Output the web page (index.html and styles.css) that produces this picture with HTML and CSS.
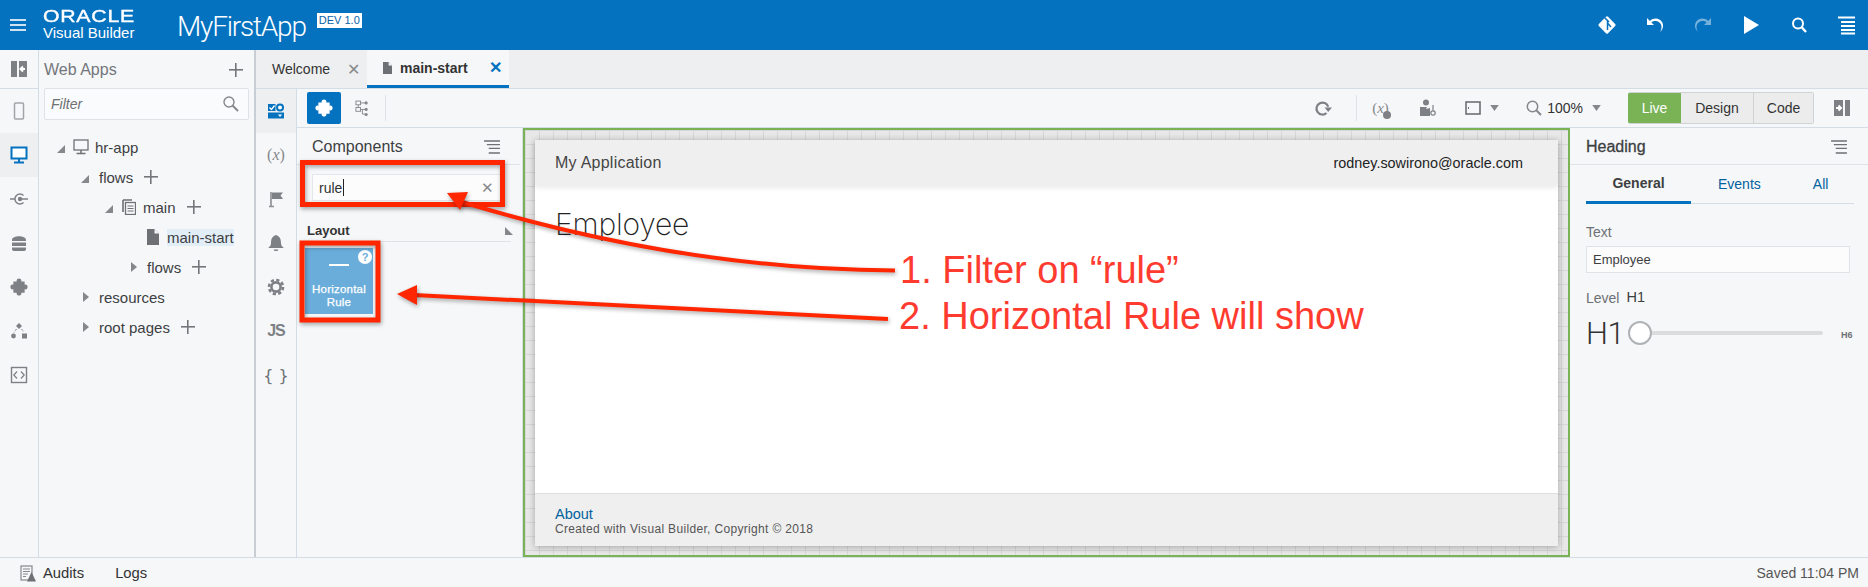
FILE: index.html
```html
<!DOCTYPE html>
<html lang="en">
<head>
    <meta charset="UTF-8">
    <title>Visual Builder - MyFirstApp</title>
    <link rel="stylesheet" href="styles.css">
</head>
<body>
<div class="app">

    <header class="topbar">
        <button class="burger"><span></span><span></span><span></span></button>
        <div class="brand">
            <div class="brand-oracle">ORACLE</div>
            <div class="brand-product">Visual Builder</div>
        </div>
        <div class="app-name">MyFirstApp</div>
        <div class="app-badge">DEV 1.0</div>
        <div class="top-actions">
            <svg class="top-ico" viewBox="0 0 20 20"><rect x="3.5" y="3.5" width="13" height="13" rx="1.5" transform="rotate(45 10 10)" fill="#fff"/><path d="M7.5 2.5 L12 7 M10.5 6 V15 M10.5 8 L14 12" stroke="#0572c0" stroke-width="1.5" fill="none"/></svg>
            <svg class="top-ico" viewBox="0 0 20 20"><path d="M2 3 V10 H9 L6.4 7.4 C9.5 4.6 15.5 6 16.4 11 C16.8 13.4 16 15.5 15 17 C18 14.5 19 10.5 17 7 C14.5 2.8 8.8 2.2 4.9 5.9 Z" fill="#fff"/></svg>
            <svg class="top-ico is-off" viewBox="0 0 20 20"><path d="M18 3 V10 H11 L13.6 7.4 C10.5 4.6 4.5 6 3.6 11 C3.2 13.4 4 15.5 5 17 C2 14.5 1 10.5 3 7 C5.5 2.8 11.2 2.2 15.1 5.9 Z" fill="#fff"/></svg>
            <svg class="top-ico" viewBox="0 0 20 20"><path d="M3 1 L18 10 L3 19 Z" fill="#fff"/></svg>
            <svg class="top-ico" viewBox="0 0 20 20"><circle cx="9" cy="8.5" r="5" fill="none" stroke="#fff" stroke-width="2"/><path d="M12.5 12 L17 17" stroke="#fff" stroke-width="2.4"/></svg>
            <svg class="top-ico" viewBox="0 0 20 20"><path d="M1 2.5 H18 M4 7 H18 M4 11 H18 M4 15 H18 M4 18.5 H18" stroke="#fff" stroke-width="2"/></svg>
        </div>
    </header>

    <div class="body">
        <nav class="rail">
            <div class="rail-item rail-head"><svg class="ico-18" viewBox="0 0 18 18"><rect x="1" y="1" width="6" height="16" fill="#7d8185"/><rect x="9" y="1" width="8" height="16" fill="#7d8185"/><path d="M15 9 H11 M13 6.5 L10.5 9 L13 11.5" stroke="#fff" stroke-width="2" fill="none"/></svg></div>
            <div class="rail-item"><svg class="ico-18" viewBox="0 0 18 18"><rect x="4.5" y="1" width="9" height="16" rx="1" fill="none" stroke="#a2a5a8" stroke-width="1.5"/></svg></div>
            <div class="rail-item is-active"><svg class="ico-18" viewBox="0 0 18 18"><rect x="1.5" y="1.5" width="15" height="11" fill="#fff" stroke="#0572c0" stroke-width="2"/><path d="M9 13 V16 M4 16.5 H14" stroke="#0572c0" stroke-width="2"/></svg></div>
            <div class="rail-item"><svg class="ico-18" viewBox="0 0 18 18"><path d="M13.5 5.5 A5 5 0 1 0 13.5 12.5" fill="none" stroke="#7d8185" stroke-width="1.5"/><circle cx="10" cy="9" r="2.2" fill="#7d8185"/><path d="M0 9 H5 M10 9 H18" stroke="#7d8185" stroke-width="1.4"/></svg></div>
            <div class="rail-item"><svg class="ico-18" viewBox="0 0 18 18"><path d="M2 6 C2 1 16 1 16 6 V7 H2 Z M2 8.5 H16 V12 H2 Z M2 13.5 H16 V15 C16 17 14 17 14 17 H4 C2 17 2 15 2 15 Z" fill="#7d8185"/></svg></div>
            <div class="rail-item"><svg class="ico-18" viewBox="2 2 16 16"><path class="grey-fill" d="M5 5 H8 C7 1.5 13 1.5 12 5 H15 V8 C18.5 7 18.5 13 15 12 V15 H12 C13 18.5 7 18.5 8 15 H5 V12 C1.5 13 1.5 7 5 8 Z"/></svg></div>
            <div class="rail-item"><svg class="ico-18" viewBox="0 0 18 18"><path d="M9 1 L12 4 L9 7 L6 4 Z" fill="#7d8185"/><circle cx="3.5" cy="14" r="2.4" fill="#7d8185"/><rect x="12" y="11.5" width="5" height="5" fill="#7d8185"/><path d="M6.5 7 L4 10.5 M11.5 7 L14 10" stroke="#7d8185" stroke-dasharray="2 1.5"/></svg></div>
            <div class="rail-item"><svg class="ico-18" viewBox="0 0 18 18"><rect x="1.5" y="1.5" width="15" height="15" fill="none" stroke="#7d8185" stroke-width="1.4"/><path d="M7 5.5 L3.8 9 L7 12.5 M11 5.5 L14.2 9 L11 12.5" fill="none" stroke="#7d8185" stroke-width="1.2"/></svg></div>
        </nav>

        <aside class="explorer">
            <div class="explorer-head">
                <span class="explorer-title">Web Apps</span>
                <span class="plus plus-big"></span>
            </div>
            <div class="filter-box">
                <span class="filter-hint">Filter</span>
                <svg class="ico-18" viewBox="0 0 18 18"><circle cx="7" cy="7" r="5" fill="none" stroke="#85888b" stroke-width="1.4"/><path d="M10.5 10.5 L16 16" stroke="#85888b" stroke-width="2"/></svg>
            </div>
            <ul class="tree">
                <li class="tree-row lv-app">
                    <svg class="twisty tw-wide" viewBox="0 0 8 8"><path d="M8 0 V8 H0 Z"/></svg>
                    <svg class="tree-ico desk" viewBox="0 0 16 16"><rect x="1" y="1" width="14" height="10" fill="none" stroke="#6d7074" stroke-width="1.3"/><path d="M8 11 V14 M3.5 14.5 H12.5" stroke="#6d7074" stroke-width="1.5"/></svg>
                    <span>hr-app</span>
                </li>
                <li class="tree-row lv-flows">
                    <svg class="twisty" viewBox="0 0 8 8"><path d="M8 0 V8 H0 Z"/></svg>
                    <span>flows</span><span class="plus"></span>
                </li>
                <li class="tree-row lv-main">
                    <svg class="twisty" viewBox="0 0 8 8"><path d="M8 0 V8 H0 Z"/></svg>
                    <svg class="tree-ico stack" viewBox="0 0 14 16"><path d="M1 1 H10 M1 1 V13" stroke="#6d7074" stroke-width="1.6" fill="none"/><rect x="3.5" y="3.5" width="10" height="12" fill="none" stroke="#6d7074" stroke-width="1.3"/><path d="M5.5 7 H11.5 M5.5 9.5 H11.5 M5.5 12 H11.5" stroke="#6d7074"/></svg>
                    <span>main</span><span class="plus"></span>
                </li>
                <li class="tree-row lv-page">
                    <svg class="tree-ico file" viewBox="0 0 12 16"><path d="M0 0 H7.5 L12 4.5 V16 H0 Z" fill="#6d7074"/><path d="M7.5 0 V4.5 H12" fill="#f6f7f9"/></svg>
                    <span class="is-selected">main-start</span>
                </li>
                <li class="tree-row lv-subflows">
                    <svg class="twisty closed" viewBox="0 0 6 10"><path d="M0 0 L6 5 L0 10 Z"/></svg>
                    <span>flows</span><span class="plus"></span>
                </li>
                <li class="tree-row lv-flows">
                    <svg class="twisty closed" viewBox="0 0 6 10"><path d="M0 0 L6 5 L0 10 Z"/></svg>
                    <span>resources</span>
                </li>
                <li class="tree-row lv-flows">
                    <svg class="twisty closed" viewBox="0 0 6 10"><path d="M0 0 L6 5 L0 10 Z"/></svg>
                    <span>root pages</span><span class="plus"></span>
                </li>
            </ul>
        </aside>

        <div class="splitter"></div>

        <div class="workspace">
            <div class="tabs">
                <div class="tab">
                    <span class="tab-name">Welcome</span>
                    <span class="tab-close">&#10005;</span>
                </div>
                <div class="tab is-current">
                    <svg class="tab-file" viewBox="0 0 12 16"><path d="M0 0 H7.5 L12 4.5 V16 H0 Z" fill="#6d7074"/><path d="M7.5 0 V4.5 H12" fill="#f6f7f9"/></svg>
                    <span class="tab-name">main-start</span>
                    <span class="tab-close">&#10005;</span>
                </div>
            </div>

            <div class="editor">
                <nav class="rail rail-tools">
                    <div class="rail-item is-active"><svg class="ico-18" viewBox="0 0 18 18"><rect x="1" y="2" width="7.5" height="7" fill="#0572c0"/><circle cx="13" cy="5.5" r="3" fill="#fff" stroke="#0572c0" stroke-width="2"/><rect x="1" y="10.5" width="16" height="6" fill="#0572c0"/><path d="M2.5 5.5 L4.5 7.5 L7.5 3.5" stroke="#fff" stroke-width="1.3" fill="none"/><path d="M11 12.5 H15 L13 15 Z" fill="#fff"/></svg></div>
                    <div class="rail-item"><span class="glyph-x">(<i>x</i>)</span></div>
                    <div class="rail-item"><svg class="ico-18" viewBox="0 0 18 18"><path d="M4 2 V16" stroke="#8a8d90" stroke-width="1.6"/><path d="M5 2.5 H16 L13.5 5.5 L16 9 H5 Z" fill="#7d8185"/><path d="M2 16.5 H7" stroke="#8a8d90" stroke-width="1.5"/></svg></div>
                    <div class="rail-item"><svg class="ico-18" viewBox="0 0 18 18"><path d="M9 1 C12 2 14 4 14 9 C14 11 15 12.5 16.5 13.5 V14 H1.5 V13.5 C3 12.5 4 11 4 9 C4 4 6 2 9 1 Z" fill="#7d8185"/><path d="M6.5 15.5 H11.5 C11 17.5 7 17.5 6.5 15.5 Z" fill="#7d8185"/></svg></div>
                    <div class="rail-item"><svg class="ico-18" viewBox="0 0 18 18"><circle cx="9" cy="9" r="4.6" fill="none" stroke="#7d8185" stroke-width="2.6"/><circle cx="9" cy="9" r="7" fill="none" stroke="#7d8185" stroke-width="2.6" stroke-dasharray="3.2 2.3"/></svg></div>
                    <div class="rail-item"><span class="glyph-js">JS</span></div>
                    <div class="rail-item"><span class="glyph-braces">{ }</span></div>
                </nav>

                <div class="designer">
                    <div class="toolbar">
                        <button class="tool-main"><svg class="ico-18" viewBox="2 2 16 16"><path d="M5 5 H8 C7 1.5 13 1.5 12 5 H15 V8 C18.5 7 18.5 13 15 12 V15 H12 C13 18.5 7 18.5 8 15 H5 V12 C1.5 13 1.5 7 5 8 Z" fill="#fff"/></svg></button>
                        <svg class="tool-struct" viewBox="0 0 14 18"><rect x="1" y="1" width="5" height="4" fill="none" stroke="#85888b"/><rect x="1" y="8" width="5" height="4" fill="none" stroke="#85888b"/><path d="M3.5 5 V8 M6 3 H11 M6 10 H11 M8 10 V15 H11" stroke="#85888b" fill="none"/><circle cx="12" cy="3" r="1.7" fill="#85888b"/><circle cx="12" cy="10" r="1.7" fill="#85888b"/><circle cx="12" cy="15.5" r="1.7" fill="#85888b"/></svg>
                        <span class="tool-sep"></span>

                        <div class="tool-right">
                            <svg class="ico-18" viewBox="0 0 18 18"><path d="M12.5 14 A6 6 0 1 1 14.2 7.8" fill="none" stroke="#7d8185" stroke-width="2.2"/><path d="M10.5 8.5 H18 L14.2 13 Z" fill="#7d8185"/></svg>
                            <span class="tool-sep sep-refresh"></span>
                            <span class="tool-vars"><span>(<i>x</i>)</span><b></b></span>
                            <svg class="ico-18 tool-person" viewBox="0 0 18 18"><circle cx="7" cy="3.5" r="3" fill="#7d8185"/><path d="M1 8 H8 L7 10 L11 9 V17 H1 Z" fill="#7d8185"/><circle cx="14" cy="14" r="2.2" fill="none" stroke="#7d8185" stroke-width="1.2"/><path d="M14 11.5 V6" stroke="#7d8185" stroke-width="1.2"/></svg>
                            <svg class="tool-device" viewBox="0 0 16 14"><rect x="1" y="1" width="14" height="12" fill="none" stroke="#6d7074" stroke-width="1.6"/><path d="M3.5 6 V8" stroke="#6d7074"/></svg>
                            <svg class="caret" viewBox="0 0 10 7"><path d="M0 0 H10 L5 7 Z"/></svg>
                            <svg class="ico-18 tool-zoom" viewBox="0 0 18 18"><circle cx="7.5" cy="7.5" r="5.2" fill="none" stroke="#85888b" stroke-width="1.5"/><path d="M11.5 11.5 L16 16" stroke="#85888b" stroke-width="2"/></svg>
                            <span class="zoom-val">100%</span>
                            <svg class="caret caret-zoom" viewBox="0 0 10 7"><path d="M0 0 H10 L5 7 Z"/></svg>
                            <div class="mode-group">
                                <span class="mode mode-live">Live</span>
                                <span class="mode mode-design">Design</span>
                                <span class="mode mode-code">Code</span>
                            </div>
                            <svg class="tool-collapse" viewBox="0 0 16 18"><rect x="0" y="1" width="9" height="16" fill="#7d8185"/><rect x="11" y="1" width="5" height="16" fill="#7d8185"/><path d="M2 9 H6 M4.5 6.5 L7 9 L4.5 11.5" stroke="#fff" stroke-width="2" fill="none"/></svg>
                        </div>
                    </div>

                    <div class="panes">
                        <section class="palette">
                            <div class="pane-head">
                                <span class="pane-title">Components</span>
                                <svg class="pane-menu" viewBox="0 0 17 15"><path d="M0 1 H17 M3 5 H17 M5 9 H17 M5 14 H17" stroke="#6d7074" stroke-width="1.5"/></svg>
                            </div>
                            <div class="search-box">
                                <span class="search-val">rule</span><span class="cursor"></span>
                                <span class="search-clear">&#10005;</span>
                            </div>
                            <div class="group-head">
                                <span>Layout</span>
                                <svg class="group-twisty" viewBox="0 0 8 8"><path d="M0 0 L8 8 H0 Z"/></svg>
                            </div>
                            <div class="tile">
                                <span class="tile-help">?</span>
                                <span class="tile-rule"></span>
                                <span class="tile-name">Horizontal<br>Rule</span>
                            </div>
                        </section>

                        <section class="canvas">
                            <div class="page">
                                <div class="page-head">
                                    <span class="page-app">My Application</span>
                                    <span class="page-user">rodney.sowirono@oracle.com</span>
                                </div>
                                <div class="page-main">
                                    <h1>Employee</h1>
                                </div>
                                <div class="page-foot">
                                    <a class="page-about">About</a>
                                    <div class="page-copy">Created with Visual Builder, Copyright &copy; 2018</div>
                                </div>
                            </div>
                        </section>

                        <section class="props">
                            <div class="pane-head props-head">
                                <span class="pane-title">Heading</span>
                                <svg class="pane-menu" viewBox="0 0 17 15"><path d="M0 1 H17 M3 5 H17 M5 9 H17 M5 14 H17" stroke="#6d7074" stroke-width="1.5"/></svg>
                            </div>
                            <div class="prop-tabs">
                                <span class="prop-tab is-current">General</span>
                                <span class="prop-tab tab-events">Events</span>
                                <span class="prop-tab tab-all">All</span>
                            </div>
                            <label class="prop-label">Text</label>
                            <div class="prop-input">Employee</div>
                            <div class="prop-level"><span class="prop-label">Level</span><span class="level-val">H1</span></div>
                            <div class="slider">
                                <span class="slider-big">H1</span>
                                <span class="slider-knob"></span>
                                <span class="slider-track"></span>
                                <span class="slider-end">H6</span>
                            </div>
                        </section>
                    </div>
                </div>
            </div>
        </div>
    </div>

    <footer class="statusbar">
        <svg class="audit-ico" viewBox="0 0 16 17"><rect x="1" y="1" width="11" height="14" fill="none" stroke="#85888b" stroke-width="1.2"/><path d="M3 4 H10 M3 6.5 H10 M3 9 H8 M3 11.5 H6" stroke="#85888b"/><path d="M11.5 7 L16 16.5 H7 Z" fill="#6d7074"/></svg>
        <span class="status-audits">Audits</span>
        <span class="status-logs">Logs</span>
        <span class="status-saved">Saved 11:04 PM</span>
    </footer>

    <!-- callouts drawn on top of the screenshot -->
    <svg class="callouts" viewBox="0 0 1868 587">
        <rect class="callout-box" x="302.5" y="162.5" width="200" height="42"/>
        <rect class="callout-box" x="302" y="243" width="76" height="77"/>
        <path class="callout-line" d="M895 270.5 C760 270 620 250 462 202"/>
        <path class="callout-head" d="M447 193 L468 192 L460 210 Z"/>
        <path class="callout-line" d="M888 319 L414 295"/>
        <path class="callout-head" d="M397 294 L417 285 L417 305 Z"/>
        <text class="callout-text" x="900" y="283">1. Filter on &#8220;rule&#8221;</text>
        <text class="callout-text" x="899" y="329">2. Horizontal Rule will show</text>
    </svg>
</div>
</body>
</html>
```

FILE: styles.css
```css
/* === Visual Builder designer === */
* {
    box-sizing: border-box;
}

html, body {
    margin: 0;
    height: 100%;
    overflow: hidden;
}

body {
    background: #f6f7f9;
    color: #333;
    font-family: "Liberation Sans", Arial, sans-serif;
    font-size: 14px;
}

.app {
    position: relative;
    display: flex;
    flex-direction: column;
    width: 1868px;
    height: 587px;
}

/* top bar */
.topbar {
    display: flex;
    align-items: center;
    flex: 0 0 50px;
    background: #0572c0;
    color: #fff;
}

.burger {
    display: flex;
    flex-direction: column;
    gap: 3px;
    width: 16px;
    margin-left: 10px;
    padding: 0;
    border: none;
    background: none;
}

.burger span {
    height: 2px;
    background: #cfe3f3;
}

.brand {
    margin-left: 17px;
    width: 134px;
}

.brand-oracle {
    font-size: 17px;
    line-height: 14px;
    letter-spacing: 0.6px;
    -webkit-text-stroke: 0.4px #fff;
    transform: scaleX(1.25);
    transform-origin: left;
    margin-top: 1px;
}

.brand-product {
    font-size: 15px;
    line-height: 18px;
    margin-top: 0;
}

.app-name {
    font-family: Roboto, "Liberation Sans", sans-serif;
    font-weight: 300;
    font-size: 28px;
    letter-spacing: -1.2px;
    margin-top: 3px;
}

.app-badge {
    align-self: flex-start;
    margin: 13px 0 0 11px;
    padding: 0 2px;
    height: 15px;
    line-height: 15px;
    background: #fff;
    color: #0a63a8;
    font-size: 11px;
}

.top-actions {
    display: flex;
    align-items: center;
    gap: 28px;
    margin-left: auto;
    margin-right: 11px;
}

.top-ico {
    width: 20px;
    height: 20px;
}

.top-ico.is-off {
    opacity: 0.45;
}

/* main area */
.body {
    display: flex;
    flex: 1;
    min-height: 0;
}

.rail {
    flex: 0 0 39px;
    border-right: 1px solid #d4dde5;
}

.rail-head {
    height: 39px !important;
    border-bottom: 1px solid #d4dde5;
}

.rail-item {
    display: flex;
    align-items: center;
    justify-content: center;
    height: 44px;
}

.rail-item.is-active {
    background: #eeeff1;
}

.grey-fill {
    fill: #7d8185;
}

.ico-18 {
    width: 18px;
    height: 18px;
    flex: none;
}

.rail-tools {
    flex: 0 0 41px;
}

.glyph-x {
    font-family: "Liberation Serif", serif;
    font-size: 16px;
    color: #85888b;
}

.glyph-js {
    font-weight: bold;
    font-size: 16px;
    letter-spacing: -1px;
    color: #7d8185;
}

.glyph-braces {
    font-family: "DejaVu Sans", sans-serif;
    font-size: 16px;
    color: #6d7074;
}

/* left explorer */
.explorer {
    flex: 0 0 215px;
    padding: 0 5px;
}

.explorer-head {
    display: flex;
    align-items: center;
    justify-content: space-between;
    height: 38px;
    padding: 2px 6px 0 0;
}

.explorer-title {
    font-size: 16px;
    color: #73767a;
}

.filter-box {
    display: flex;
    align-items: center;
    justify-content: space-between;
    height: 32px;
    padding: 0 8px 0 6px;
    background: #fafbfc;
    border: 1px solid #dfe3e8;
    border-radius: 2px;
}

.filter-hint {
    font-style: italic;
    color: #6d7074;
}

.plus {
    position: relative;
    display: inline-block;
    width: 14px;
    height: 14px;
    margin-left: 11px;
    background:
        linear-gradient(#73767a, #73767a) center / 14px 1.6px no-repeat,
        linear-gradient(#73767a, #73767a) center / 1.6px 14px no-repeat;
}

.plus-big {
    margin-left: 0;
}

.tree {
    list-style: none;
    margin: 12px 0 0;
    padding: 0;
}

.tree-row {
    display: flex;
    align-items: center;
    height: 30px;
    font-size: 15px;
    color: #3d3f42;
}

.lv-app { padding-left: 13px; }
.lv-flows { padding-left: 37px; }
.lv-main { padding-left: 61px; }
.lv-page { padding-left: 103px; }
.lv-subflows { padding-left: 87px; }

.twisty {
    flex: 0 0 8px;
    width: 8px;
    height: 8px;
    margin-right: 10px;
    margin-top: 4px;
    fill: #85888b;
}

.twisty.tw-wide {
    margin-right: 8px;
}

.twisty.closed {
    width: 6px;
    flex-basis: 6px;
    height: 10px;
    margin-right: 10px;
    margin-top: 0;
}

.lv-flows .twisty.closed {
    margin-left: 2px;
}

.lv-main .twisty {
    margin-right: 9px;
}

.tree-ico {
    flex: none;
}

.tree-ico.desk {
    width: 16px;
    height: 16px;
    margin-right: 6px;
}

.tree-ico.stack {
    width: 14px;
    height: 16px;
    margin-right: 7px;
}

.tree-ico.file {
    width: 12px;
    height: 16px;
    margin-right: 8px;
}

.is-selected {
    background: #e2eef7;
}

.splitter {
    flex: 0 0 2px;
    background: #c9ced4;
}

/* editor */
.workspace {
    display: flex;
    flex-direction: column;
    flex: 1;
    min-width: 0;
}

.tabs {
    display: flex;
    flex: 0 0 39px;
    background: #eeeff1;
    border-bottom: 1px solid #d4dde5;
}

.tab {
    display: flex;
    align-items: center;
    width: 111px;
    padding: 0 7px 0 16px;
    font-size: 14px;
}

.tab-name {
    flex: 1;
    color: #333;
}

.tab-close {
    font-size: 16px;
    color: #85888b;
}

.tab.is-current {
    width: 142px;
    background: #f6f7f9;
    border-bottom: 3px solid #0572c0;
    font-weight: bold;
}

.is-current .tab-close {
    color: #0572c0;
}

.tab-file {
    width: 9px;
    height: 12px;
    margin-right: 8px;
}

.editor {
    display: flex;
    flex: 1;
    min-height: 0;
}

.designer {
    display: flex;
    flex-direction: column;
    flex: 1;
    min-width: 0;
}

.toolbar {
    display: flex;
    align-items: center;
    flex: 0 0 39px;
    padding-left: 10px;
    border-bottom: 1px solid #d4dde5;
}

.tool-main {
    display: flex;
    align-items: center;
    justify-content: center;
    width: 34px;
    height: 32px;
    padding: 0;
    border: none;
    border-radius: 2px;
    background: #0572c0;
}

.tool-struct {
    width: 13px;
    height: 17px;
    margin-left: 14px;
}

.tool-sep {
    width: 1px;
    height: 26px;
    margin-left: 17px;
    background: #dfe2e6;
}

.tool-right {
    display: flex;
    align-items: center;
    margin-left: auto;
    padding-right: 18px;
}

.sep-refresh {
    margin-left: 24px;
}

.tool-vars {
    position: relative;
    width: 18px;
    margin-left: 15px;
    font-family: "Liberation Serif", serif;
    font-size: 15px;
    color: #85888b;
}

.tool-vars b {
    position: absolute;
    right: -1px;
    bottom: -2px;
    width: 8px;
    height: 8px;
    border-radius: 50%;
    background: #7d8185;
}

.tool-person {
    margin-left: 29px;
}

.tool-device {
    width: 16px;
    height: 14px;
    margin-left: 28px;
}

.caret {
    width: 9px;
    height: 6px;
    margin-left: 9px;
    fill: #85888b;
}

.tool-zoom {
    margin-left: 26px;
}

.zoom-val {
    margin-left: 4px;
    font-size: 14px;
    color: #333;
}

.caret-zoom {
    margin-left: 9px;
}

.mode-group {
    display: flex;
    height: 32px;
    margin-left: 27px;
    border-radius: 2px;
    overflow: hidden;
    border: 1px solid #d0d3d6;
    border-left: none;
}

.mode {
    display: flex;
    align-items: center;
    justify-content: center;
    font-size: 14px;
    background: #ececec;
    color: #333;
}

.mode-live {
    width: 53px;
    background: #7ab356;
    color: #fff;
    margin-top: -1px;
    margin-bottom: -1px;
}

.mode-design {
    width: 73px;
    border-right: 1px solid #d0d3d6;
}

.mode-code {
    width: 59px;
}

.tool-collapse {
    width: 16px;
    height: 18px;
    margin-left: 20px;
}

.panes {
    display: flex;
    flex: 1;
    min-height: 0;
}

/* component palette */
.palette {
    flex: 0 0 226px;
    border-right: 1px solid #d4dde5;
    padding-right: 2px;
}

.pane-head {
    display: flex;
    align-items: center;
    justify-content: space-between;
    height: 37px;
    padding: 2px 20px 0 15px;
    border-bottom: 1px solid #dfe3e8;
}

.pane-title {
    font-size: 16px;
    color: #3d3f42;
}

.pane-menu {
    width: 16px;
    height: 14px;
}

.search-box {
    display: flex;
    align-items: center;
    height: 27px;
    margin: 9px 17px 0 15px;
    padding: 0 7px 0 6px;
    background: #fcfcfd;
    border: 1px solid #e3e6ea;
    border-right: none;
    font-size: 14px;
}

.cursor {
    width: 1px;
    height: 17px;
    margin-left: 1px;
    background: #222;
}

.search-clear {
    margin-left: auto;
    margin-right: 2px;
    font-size: 15px;
    color: #85888b;
}

.group-head {
    display: flex;
    align-items: flex-end;
    justify-content: space-between;
    height: 31px;
    margin: 10px 9px 0 7px;
    padding: 0 0 3px 3px;
    border-bottom: 1px solid #dfe3e8;
    font-size: 13px;
    font-weight: bold;
    color: #333;
}

.group-twisty {
    width: 8px;
    height: 8px;
    margin-right: -2px;
    margin-bottom: 3px;
    fill: #85888b;
}

.tile {
    position: relative;
    display: flex;
    flex-direction: column;
    align-items: center;
    width: 68px;
    height: 66px;
    margin: 6px 0 0 8px;
    padding-top: 16px;
    background: #6badda;
    color: #fff;
}

.tile-rule {
    width: 20px;
    height: 2px;
    background: #fff;
}

.tile-name {
    margin-top: 17px;
    font-size: 11.5px;
    line-height: 13px;
    text-align: center;
    letter-spacing: 0.2px;
    -webkit-text-stroke: 0.25px #fff;
}

.tile-help {
    position: absolute;
    top: 2px;
    right: 1px;
    width: 14px;
    height: 14px;
    line-height: 14px;
    border-radius: 50%;
    background: #fff;
    color: #6badda;
    font-size: 11px;
    font-weight: bold;
    text-align: center;
}

/* page canvas */
.canvas {
    flex: 1;
    min-width: 0;
    padding: 10px 10px 9px;
    border: 2px solid #7ab356;
    background-color: #e8e8e8;
    background-image:
        linear-gradient(#d7d7d7 1px, transparent 1px),
        linear-gradient(90deg, #d7d7d7 1px, transparent 1px);
    background-size: 14px 14px;
}

.page {
    display: flex;
    flex-direction: column;
    height: 100%;
    background: #fff;
    box-shadow: 0 1px 7px rgba(0, 0, 0, 0.3);
}

.page-head {
    display: flex;
    align-items: center;
    justify-content: space-between;
    flex: 0 0 45px;
    padding: 0 35px 0 20px;
    background: #efefef;
    box-shadow: 0 3px 5px rgba(0, 0, 0, 0.08);
}

.page-app {
    font-size: 16px;
    letter-spacing: 0.25px;
    color: #454545;
}

.page-user {
    font-size: 14.4px;
    color: #222;
}

.page-main {
    flex: 1;
    padding: 20px 20px;
}

.page-main h1 {
    margin: 0;
    font-family: Inter, Roboto, "Liberation Sans", sans-serif;
    font-size: 30px;
    font-weight: 200;
    letter-spacing: -0.2px;
    line-height: 38px;
    color: #222;
}

.page-foot {
    flex: 0 0 53px;
    padding: 12px 20px 0;
    background: #efefef;
    border-top: 1px solid #dfdfdf;
}

.page-about {
    display: block;
    font-size: 14.5px;
    line-height: 17px;
    color: #00629e;
}

.page-copy {
    margin-top: -1px;
    font-size: 12px;
    line-height: 15px;
    letter-spacing: 0.33px;
    color: #555;
}

/* properties */
.props {
    flex: 0 0 298px;
    padding-bottom: 0;
}

.props-head {
    padding: 2px 21px 0 16px;
}

.props-head .pane-title {
    color: #3d3f42;
    font-weight: 500;
    -webkit-text-stroke: 0.3px #3d3f42;
}

.prop-tabs {
    display: flex;
    height: 39px;
    margin: 0 14px 0 16px;
    border-bottom: 1px solid #d4dde5;
}

.prop-tab {
    display: flex;
    align-items: center;
    justify-content: center;
    color: #00629e;
    font-size: 14px;
}

.prop-tab.is-current {
    width: 105px;
    margin-bottom: -1px;
    border-bottom: 3px solid #0572c0;
    color: #3d3f42;
    font-weight: bold;
}

.tab-events {
    margin-left: 27px;
}

.tab-all {
    margin-left: 52px;
}

.prop-label {
    color: #6d7074;
    font-size: 14px;
}

.props > .prop-label {
    display: block;
    margin: 20px 0 0 16px;
    line-height: 16px;
}

.prop-input {
    display: flex;
    align-items: center;
    width: 264px;
    height: 27px;
    margin: 6px 0 0 16px;
    padding-left: 6px;
    background: #fcfcfd;
    border: 1px solid #dfe3e8;
    font-size: 13px;
    color: #3d3f42;
}

.prop-level {
    display: flex;
    align-items: baseline;
    gap: 7px;
    margin: 17px 0 0 16px;
}

.level-val {
    font-size: 14.5px;
    color: #3d3f42;
    position: relative;
    top: -1px;
}

.slider {
    position: relative;
    display: flex;
    align-items: center;
    height: 32px;
    margin: 11px 0 0 16px;
}

.slider-big {
    font-family: Roboto, "Liberation Sans", sans-serif;
    font-weight: 300;
    font-size: 31px;
    letter-spacing: -0.5px;
    color: #333;
}

.slider-track {
    position: absolute;
    left: 54px;
    width: 183px;
    height: 4px;
    border-radius: 2px;
    background: #dcdcdc;
}

.slider-knob {
    position: absolute;
    left: 42px;
    z-index: 1;
    width: 24px;
    height: 24px;
    border-radius: 50%;
    background: #fff;
    border: 2px solid #b0b3b6;
}

.slider-end {
    position: absolute;
    left: 255px;
    top: 13px;
    font-size: 9px;
    font-weight: bold;
    color: #6d7074;
}

/* status bar */
.statusbar {
    display: flex;
    align-items: center;
    flex: 0 0 30px;
    padding: 1px 9px 0 20px;
    border-top: 1px solid #d4dde5;
    font-size: 14.8px;
    color: #333;
}

.audit-ico {
    width: 16px;
    height: 17px;
}

.status-audits {
    margin-left: 7px;
}

.status-logs {
    margin-left: 31px;
}

.status-saved {
    margin-left: auto;
    font-size: 14px;
    color: #555;
}

/* red annotations over the screenshot */
.callouts {
    position: absolute;
    left: 0;
    top: 0;
    width: 1868px;
    height: 587px;
    pointer-events: none;
}

.callout-box {
    fill: none;
    stroke: #ff2600;
    stroke-width: 5;
    filter: drop-shadow(1px 2px 2px rgba(0, 0, 0, 0.35));
}

.callout-line {
    fill: none;
    stroke: #ff2600;
    stroke-width: 4;
    filter: drop-shadow(1px 2px 2px rgba(0, 0, 0, 0.35));
}

.callout-head {
    fill: #ff2600;
    filter: drop-shadow(1px 2px 2px rgba(0, 0, 0, 0.35));
}

.callout-text {
    font-family: "Liberation Sans", Arial, sans-serif;
    font-size: 38px;
    fill: #ff3b30;
}
```
